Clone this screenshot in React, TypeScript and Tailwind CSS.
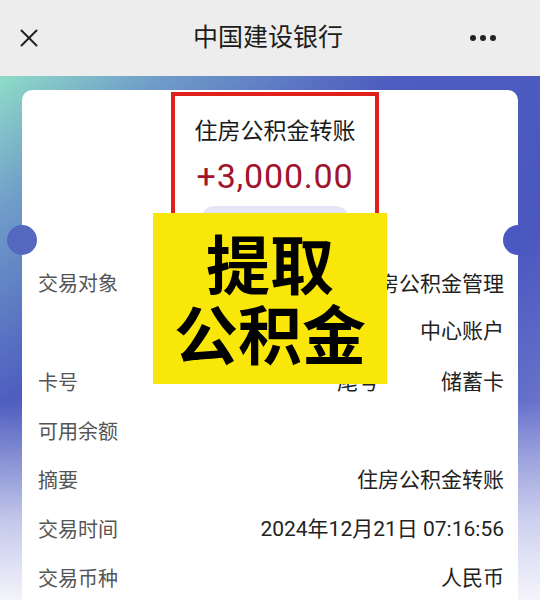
import { X } from "lucide-react";

const rows = [
  { label: "卡号", value: "储蓄卡", tail: true },
  { label: "可用余额", value: "" },
  { label: "摘要", value: "住房公积金转账" },
  { label: "交易时间", value: "2024年12月21日 07:16:56" },
  { label: "交易币种", value: "人民币" },
];

const App = () => {
  return (
    <div className="w-[540px] h-[600px] overflow-hidden bg-white font-['Roboto','Noto_Sans_CJK_SC',sans-serif]">
      {/* top bar */}
      <div className="h-[76px] bg-[#ededed] flex items-center justify-between pl-[14px] pr-[44px]">
        <X className="w-[30px] h-[30px] text-[#222]" strokeWidth={1.6} />
        <h1 className="text-[25px] text-[#1c1c1c] ml-[22px]">中国建设银行</h1>
        <div className="flex gap-[4px] items-center">
          <span className="w-[6px] h-[6px] rounded-full bg-[#222]"></span>
          <span className="w-[6px] h-[6px] rounded-full bg-[#222]"></span>
          <span className="w-[6px] h-[6px] rounded-full bg-[#222]"></span>
        </div>
      </div>

      <div className="h-[524px] pt-[14px] px-[22px] bg-[linear-gradient(to_bottom,rgba(255,255,255,0)_0%,rgba(255,255,255,0)_62%,rgba(226,228,246,0.8)_85%,#f4f4fb_100%),linear-gradient(140deg,#8fdcc8_0%,#6f9cc8_14%,#4e5dbf_34%,#4a58bf_62%,#8a90d8_100%)]">
        <div className="relative bg-white rounded-[10px] h-[560px]">
          {/* ticket notches */}
          <div className="absolute left-[-15px] top-[135px] w-[30px] h-[30px] rounded-full bg-[#5468c0]"></div>
          <div className="absolute right-[-15px] top-[135px] w-[30px] h-[30px] rounded-full bg-[#4a58bf]"></div>

          <div className="flex justify-center pt-[2px] pl-[10px]">
            <div className="w-[208px] h-[150px] border-[4px] border-[#e0201b] flex flex-col items-center">
              <p className="mt-[21px] text-[23px] text-[#1a1a1a] leading-[30px]">住房公积金转账</p>
              <p className="mt-[9px] text-[34px] tracking-[0.8px] text-[#a3132b] leading-[40px]">+3,000.00</p>
              <div className="mt-[10px] w-[150px] h-[30px] rounded-full bg-[#e4e6f8]"></div>
            </div>
          </div>

          <div className="mt-[19px] pl-[16px] pr-[14px]">
            <div className="flex justify-between leading-[47px]">
              <span className="text-[20px] text-[#555]">交易对象</span>
              <span className="text-[21px] text-right text-[#222]">
                住房公积金管理
                <br />
                中心账户
              </span>
            </div>
            <div className="mt-[3px]">
              {rows.map((r) => (
                <div key={r.label} className="h-[49px] flex items-center justify-between">
                  <span className="text-[20px] text-[#555]">{r.label}</span>
                  <span className="text-[21px] text-[#222]">
                    {r.tail && <span className="mr-[62px]">尾号</span>}
                    {r.value}
                  </span>
                </div>
              ))}
            </div>
          </div>

          {/* sticker */}
          <div className="absolute left-[131px] top-[123px] w-[234px] h-[171px] bg-[#f9e70a] flex flex-col items-center justify-center pt-[8px]">
            <p className="text-[64px] leading-[70px] font-bold text-black">提取</p>
            <p className="text-[64px] leading-[70px] font-bold text-black">公积金</p>
          </div>
        </div>
      </div>
    </div>
  );
};

export default App;
